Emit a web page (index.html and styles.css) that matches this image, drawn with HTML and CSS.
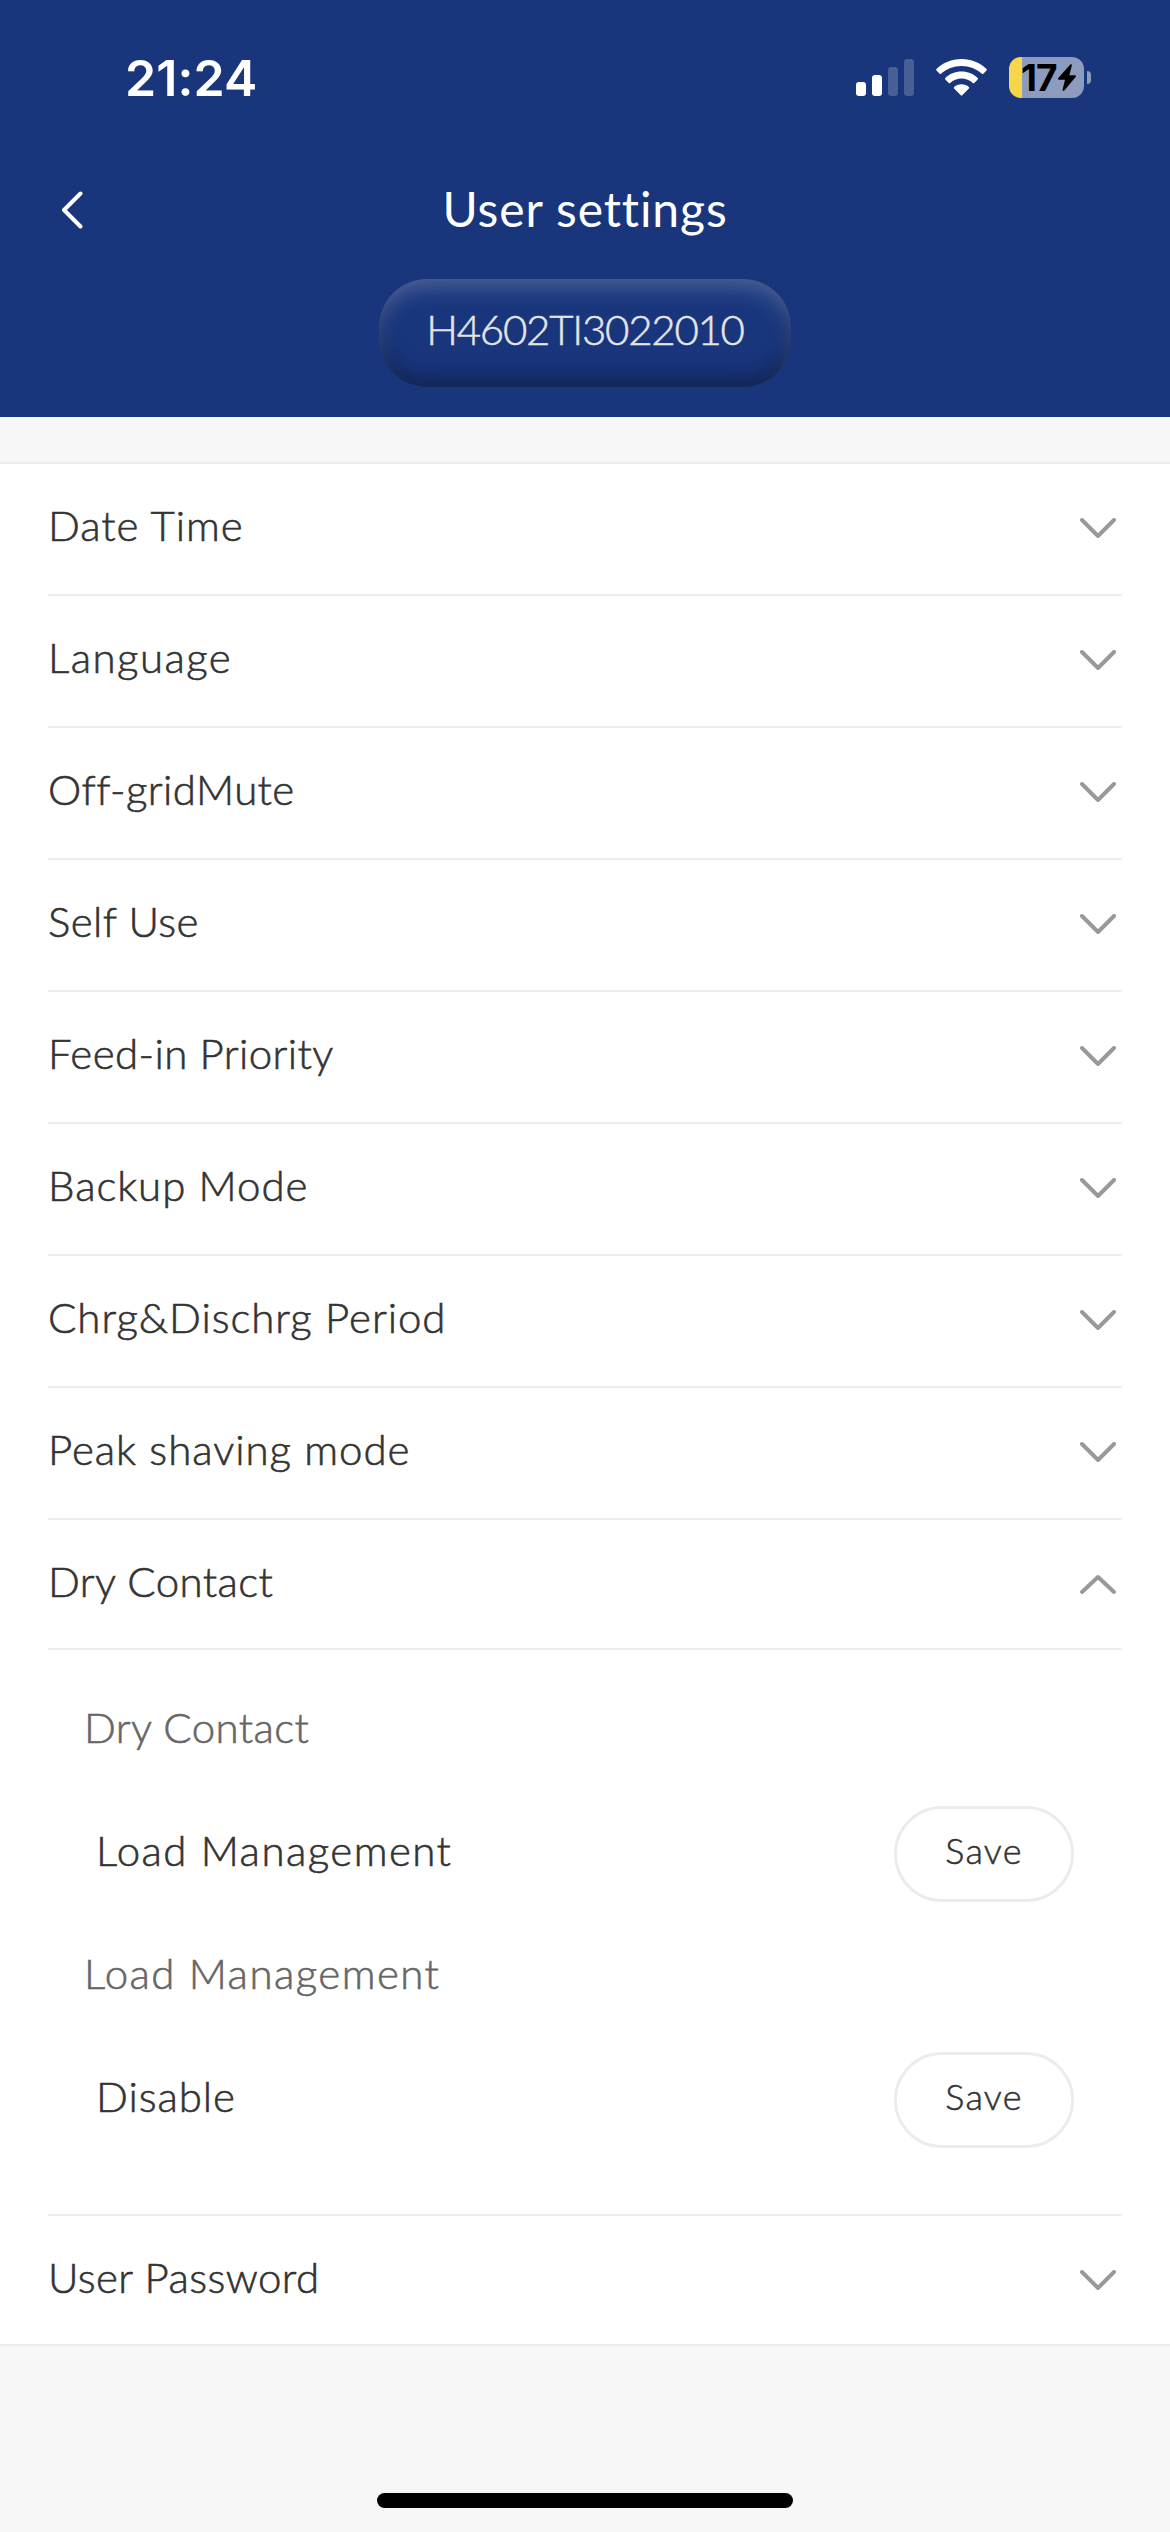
FILE: index.html
```
<!DOCTYPE html>
<html lang="en">
<head>
    <meta charset="utf-8">
    <title>User settings</title>
    <link rel="stylesheet" href="styles.css">
</head>
<body>
    <header class="header">
        <div class="status-bar">
            <span class="time">21:24</span>
            <div class="status-icons">
                <svg class="signal" width="58" height="37" viewBox="0 0 58 37" fill="#fff">
                    <rect x="0" y="23" width="10" height="14" rx="3"/>
                    <rect x="16" y="16" width="10" height="21" rx="3"/>
                    <rect x="32" y="8" width="10" height="29" rx="3" opacity="0.2"/>
                    <rect x="48" y="0" width="10" height="37" rx="3" opacity="0.2"/>
                </svg>
                <svg class="wifi" width="51" height="37" viewBox="0 0 51 37" fill="#fff">
                    <path d="M25.5 0C35.300 0 44.200 3.800 50.500 10Q51.100 10.700 50.500 11.400L47.300 14.800Q46.600 15.400 45.900 14.800C40.500 9.800 33.400 7 25.500 7S10.500 9.800 5.100 14.800Q4.400 15.400 3.700 14.800L.5 11.400Q-.1 10.700 .5 10C6.800 3.800 15.700 0 25.500 0Z"/>
                    <path d="M25.500 12.600C31.800 12.600 37.500 15 41.700 19Q42.300 19.700 41.700 20.400L38.200 24Q37.500 24.600 36.800 24C33.800 21.300 29.800 19.600 25.500 19.600S17.200 21.300 14.200 24Q13.500 24.600 12.800 24L9.300 20.400Q8.700 19.700 9.300 19C13.500 15 19.200 12.600 25.500 12.600Z"/>
                    <path d="M25.500 25.300C28.300 25.300 30.900 26.300 32.900 28Q33.600 28.700 32.900 29.400L26.200 36.300Q25.500 37 24.800 36.300L18.100 29.400Q17.400 28.700 18.100 28C20.100 26.300 22.700 25.300 25.500 25.300Z"/>
                </svg>
                <div class="battery">
                    <div class="battery-body">
                        <span>17</span>
                        <svg width="18" height="27" viewBox="0 0 18 27"><path d="M12.500 .3 0 14.200Q-.2 15.700 1 15.700H7L4.500 26Q5 27.500 6.300 26.500L17.800 12.800Q18.200 11.200 17 11.200H11.300L13.900 1.500Q13.900 -.3 12.500 .3Z"/></svg>
                    </div>
                    <div class="battery-cap"></div>
                </div>
            </div>
        </div>
        <div class="nav">
            <svg class="back" width="22" height="38" viewBox="0 0 22 38"><path d="M19.500 2.500 3 19 19.500 35.500"/></svg>
            <h1>User settings</h1>
        </div>
        <div class="serial">H4602TI3022010</div>
    </header>

    <main class="list">
        <div class="row"><span class="wide">Date Time</span><svg class="chevron" viewBox="0 0 36 21"><path d="M2 2 18 18 34 2"/></svg></div>
        <div class="row"><span class="wider">Language</span><svg class="chevron" viewBox="0 0 36 21"><path d="M2 2 18 18 34 2"/></svg></div>
        <div class="row"><span>Off-gridMute</span><svg class="chevron" viewBox="0 0 36 21"><path d="M2 2 18 18 34 2"/></svg></div>
        <div class="row"><span>Self Use</span><svg class="chevron" viewBox="0 0 36 21"><path d="M2 2 18 18 34 2"/></svg></div>
        <div class="row"><span>Feed-in Priority</span><svg class="chevron" viewBox="0 0 36 21"><path d="M2 2 18 18 34 2"/></svg></div>
        <div class="row"><span class="wide">Backup Mode</span><svg class="chevron" viewBox="0 0 36 21"><path d="M2 2 18 18 34 2"/></svg></div>
        <div class="row"><span class="wide">Chrg&amp;Dischrg Period</span><svg class="chevron" viewBox="0 0 36 21"><path d="M2 2 18 18 34 2"/></svg></div>
        <div class="row"><span class="wide">Peak shaving mode</span><svg class="chevron" viewBox="0 0 36 21"><path d="M2 2 18 18 34 2"/></svg></div>
        <div class="row row-open"><span>Dry Contact</span><svg class="chevron" viewBox="0 0 36 21"><path d="M2 18 18 3 34 18"/></svg></div>
        <div class="panel">
            <div class="label">Dry Contact</div>
            <div class="field"><span class="wider">Load Management</span><button class="save">Save</button></div>
            <div class="label wider">Load Management</div>
            <div class="field"><span class="wide">Disable</span><button class="save">Save</button></div>
        </div>
        <div class="row row-last"><span>User Password</span><svg class="chevron" viewBox="0 0 36 21"><path d="M2 2 18 18 34 2"/></svg></div>
    </main>

    <div class="home-bar"></div>
</body>
</html>
```
FILE: styles.css
```
* { box-sizing: border-box; }
body { margin: 0; height: 2532px; display: flex; flex-direction: column; background: #f7f7f7; color: #333; font-family: Lato, sans-serif; font-size: 42px; line-height: 50px; }
svg { display: block; flex: none; }

.header { height: 417px; background: #19367d; color: #fff; }
.status-bar { height: 156px; display: flex; justify-content: space-between; padding: 0 79px 0 125px; }
.time { padding-top: 48px; font-family: Inter, sans-serif; font-size: 50px; font-weight: 600; line-height: 60px; letter-spacing: 0.1px; }
.status-icons { display: flex; align-items: flex-start; padding-top: 57px; }
.signal { margin: 2px 22px 0 0; }
.wifi { margin: 2px 22px 0 0; }
.battery { display: flex; align-items: center; gap: 3px; }
.battery-body { width: 75px; height: 41px; display: flex; align-items: center; gap: 2px; padding-left: 12px; border-radius: 12px; background: linear-gradient(90deg, #f8d64a 13px, #8c9bbe 13px); color: #000; font-family: Inter, sans-serif; font-size: 37px; font-weight: 700; line-height: 41px; letter-spacing: -1px; }
.battery-cap { width: 4px; height: 13px; border-radius: 0 4px 4px 0; background: #8c9bbe; }

.nav { height: 108px; display: grid; grid-template-columns: 100px 1fr 100px; align-items: center; }
.back { margin-left: 61px; fill: none; stroke: #fff; stroke-width: 4; stroke-linecap: round; stroke-linejoin: round; }
.nav h1 { margin: 0; padding-bottom: 3px; text-align: center; font-size: 48px; font-weight: 400; line-height: 58px; letter-spacing: 0.9px; }
.serial { width: 412px; height: 108px; margin: 15px auto 0; padding-top: 25px; border-radius: 48px; text-align: center; color: #e5e5e5; font-weight: 300; letter-spacing: -1.25px; -webkit-text-stroke: 0.5px; box-shadow: inset 0 12px 24px -6px rgba(255, 255, 255, 0.26), inset 0 -12px 24px -6px rgba(0, 0, 0, 0.45); }

.list { margin-top: 45px; padding: 0 48px; border-top: 2px solid #ebebf0; border-bottom: 2px solid #ebebeb; background: #fff; font-weight: 300; letter-spacing: 0.4px; -webkit-text-stroke: 0.6px; }
.wide { letter-spacing: 0.95px; }
.wider { letter-spacing: 1.45px; }
.row { height: 132px; display: flex; justify-content: space-between; padding: 36px 6px 0 0; border-bottom: 2px solid #ededef; }
.row-open { height: 130px; }
.row-last { height: 128px; border-bottom: 0; }
.chevron { width: 36px; height: 21px; margin-top: 18px; fill: none; stroke: #999; stroke-width: 4; stroke-linecap: round; stroke-linejoin: round; }

.panel { height: 566px; padding: 33px 48px 0 36px; border-bottom: 2px solid #ededef; }
.label { height: 123px; padding-top: 19px; color: #666; }
.field { height: 123px; display: flex; justify-content: space-between; align-items: flex-start; padding-left: 12px; }
.field span { padding-top: 19px; }
.save { width: 180px; height: 96px; padding: 0 0 8px; border: 3px solid #ebebf0; border-radius: 48px; background: #fff; color: #333; font: 300 36px Lato, sans-serif; letter-spacing: 1.2px; -webkit-text-stroke: 0.5px; }

.home-bar { width: 416px; height: 15px; margin: auto auto 24px; border-radius: 8px; background: #000; }
```
